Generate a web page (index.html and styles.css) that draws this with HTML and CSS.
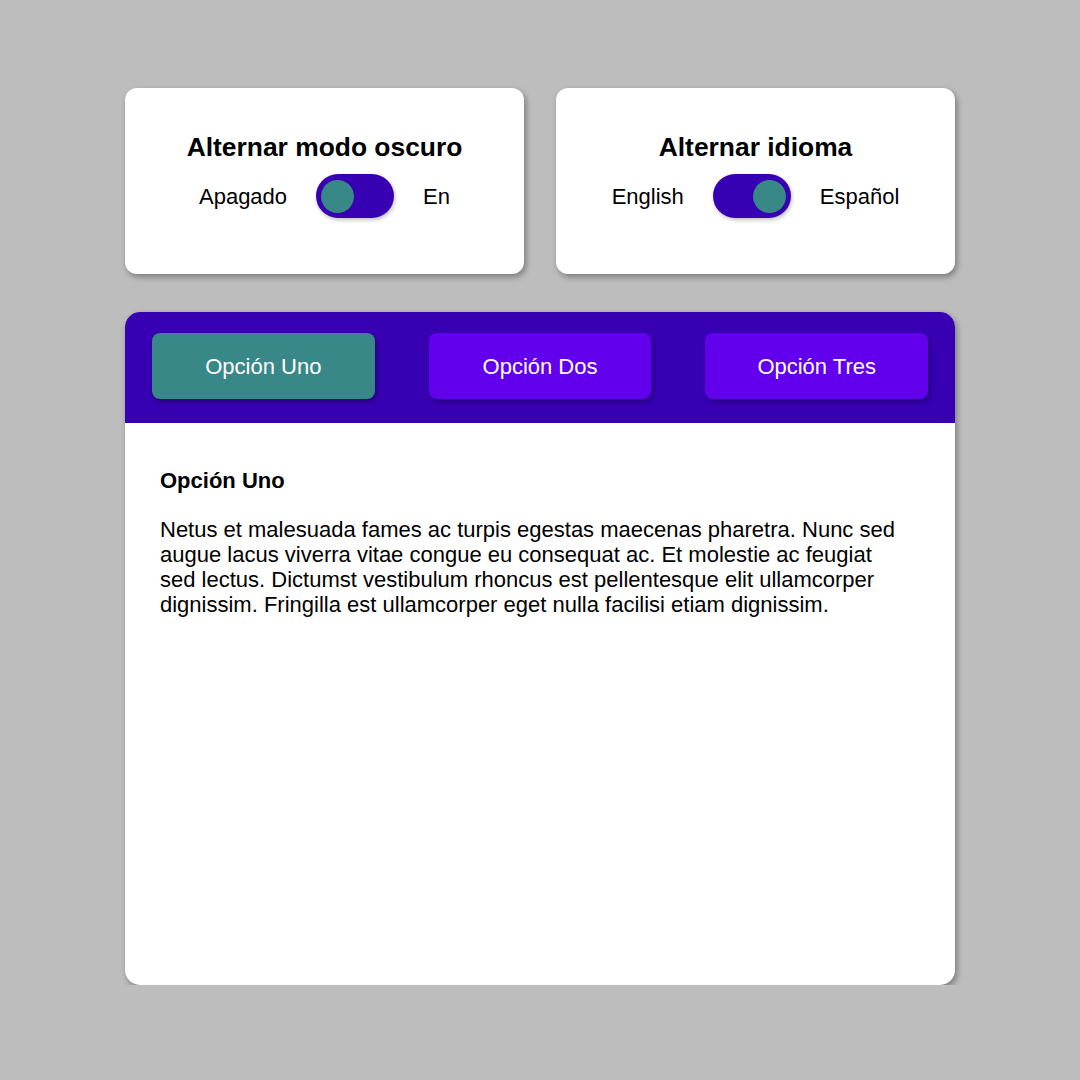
FILE: index.html
```html
<!DOCTYPE html>
<html lang="es">
<head>
<meta charset="utf-8">
<title>Alternar</title>
<link rel="stylesheet" href="styles.css">
</head>
<body>
<div class="page">
  <div class="top-row">
    <section class="card">
      <h2 class="card-title">Alternar modo oscuro</h2>
      <div class="switch-row">
        <span class="label">Apagado</span>
        <span class="switch switch-off"><span class="knob"></span></span>
        <span class="label">En</span>
      </div>
    </section>
    <section class="card">
      <h2 class="card-title">Alternar idioma</h2>
      <div class="switch-row">
        <span class="label">English</span>
        <span class="switch switch-on"><span class="knob"></span></span>
        <span class="label">Español</span>
      </div>
    </section>
  </div>
  <section class="tabs-card">
    <div class="tab-bar">
      <button class="tab active">Opción Uno</button>
      <button class="tab">Opción Dos</button>
      <button class="tab">Opción Tres</button>
    </div>
    <div class="tab-content">
      <h3 class="content-title">Opción Uno</h3>
      <p class="content-text">Netus et malesuada fames ac turpis egestas maecenas pharetra. Nunc sed augue lacus viverra vitae congue eu consequat ac. Et molestie ac feugiat sed lectus. Dictumst vestibulum rhoncus est pellentesque elit ullamcorper dignissim. Fringilla est ullamcorper eget nulla facilisi etiam dignissim.</p>
    </div>
  </section>
</div>
</body>
</html>
```
FILE: styles.css
```css
* { box-sizing: border-box; }
html, body {
  margin: 0;
  padding: 0;
  background: #bdbdbd;
  font-family: "Liberation Sans", Arial, sans-serif;
  color: #000;
}
.page {
  width: 830px;
  margin: 0 auto;
  padding-top: 88px;
  display: flex;
  flex-direction: column;
  gap: 38px;
}
.top-row {
  display: flex;
  gap: 32px;
}
.card {
  flex: 1;
  height: 186px;
  background: #fff;
  border-radius: 12px;
  box-shadow: 2px 3px 6px rgba(0,0,0,0.35);
  display: flex;
  flex-direction: column;
  align-items: center;
  padding-top: 44px;
}
.card-title {
  margin: 0;
  font-size: 26.4px;
  font-weight: bold;
  line-height: 30px;
}
.switch-row {
  margin-top: 12px;
  display: flex;
  align-items: center;
  gap: 29px;
}
.label {
  font-size: 22px;
  line-height: 25px;
}
.switch {
  width: 78px;
  height: 44px;
  border-radius: 22px;
  background: #3700b3;
  display: flex;
  align-items: center;
  padding: 0 5px;
  box-shadow: 1px 2px 4px rgba(0,0,0,0.25);
}
.switch-on { justify-content: flex-end; }
.knob {
  width: 33px;
  height: 33px;
  border-radius: 50%;
  background: #388887;
}
.tabs-card {
  height: 673px;
  background: #fff;
  border-radius: 15px;
  box-shadow: 2px 3px 6px rgba(0,0,0,0.35);
  overflow: hidden;
}
.tab-bar {
  background: #3700b3;
  display: flex;
  gap: 54px;
  padding: 21px 27px 24px;
}
.tab {
  flex: 1;
  height: 66px;
  border: none;
  border-radius: 8px;
  background: #6200ee;
  color: #fff;
  font-family: "Liberation Sans", Arial, sans-serif;
  font-size: 22px;
  padding-top: 2px;
  box-shadow: 2px 3px 5px rgba(0,0,0,0.3);
}
.tab.active { background: #388887; }
.tab-content {
  padding: 45px 55px 35px 35px;
}
.content-title {
  margin: 0;
  font-size: 22px;
  font-weight: bold;
  line-height: 25px;
}
.content-text {
  margin: 24px 0 0;
  font-size: 22px;
  line-height: 25px;
}
```
